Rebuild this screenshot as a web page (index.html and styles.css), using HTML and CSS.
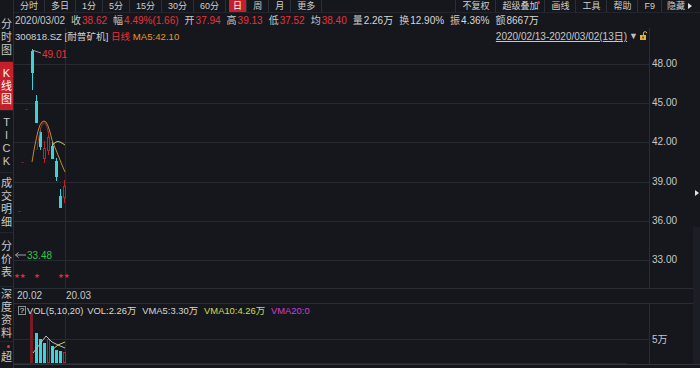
FILE: index.html
```html
<!DOCTYPE html>
<html lang="zh-CN">
<head>
<meta charset="utf-8">
<link rel="stylesheet" href="styles.css">
</head>
<body>
<div class="app">
  <!-- left vertical tabs -->
  <ul class="side">
    <li class="side-tab t-fs">分<br>时<br>图</li>
    <li class="side-tab t-k on">K<br>线<br>图</li>
    <li class="side-tab t-tick">T<br>I<br>C<br>K</li>
    <li class="side-tab t-deal">成<br>交<br>明<br>细</li>
    <li class="side-tab t-price">分<br>价<br>表</li>
    <li class="side-tab t-depth">深<br>度<br>资<br>料</li>
    <li class="side-tab t-super"><i class="dot"></i>超</li>
  </ul>

  <div class="main">
    <div class="toolbar">
      <div class="tabs">
        <span class="tab">分时</span>
        <span class="tab">多日</span>
        <span class="tab">1分</span>
        <span class="tab">5分</span>
        <span class="tab">15分</span>
        <span class="tab">30分</span>
        <span class="tab">60分</span>
        <span class="tab active">日</span>
        <span class="tab">周</span>
        <span class="tab">月</span>
        <span class="tab">更多</span>
      </div>
      <div class="tabs tabs-right">
        <span class="tab">不复权</span>
        <span class="tab">超级叠加<i class="badge"></i></span>
        <span class="tab">画线</span>
        <span class="tab">工具</span>
        <span class="tab">帮助</span>
        <span class="tab">F9</span>
        <span class="tab last">隐藏<i class="caret"></i></span>
      </div>
    </div>

    <div class="quote">
      <span class="q-date">2020/03/02</span>
      <span>收<b class="rise">38.62</b></span>
      <span>幅<b class="rise">4.49%(1.66)</b></span>
      <span>开<b class="rise">37.94</b></span>
      <span>高<b class="rise">39.13</b></span>
      <span>低<b class="rise">37.52</b></span>
      <span>均<b class="rise">38.40</b></span>
      <span>量<b>2.26万</b></span>
      <span>换<b>12.90%</b></span>
      <span>振<b>4.36%</b></span>
      <span>额<b>8667万</b></span>
    </div>

    <div class="board">
      <!-- price panel -->
      <div class="plot">
        <div class="caption">
          <span class="title">300818.SZ [耐普矿机] <span class="rise">日线</span> <span class="ma5">MA5:42.10</span></span>
          <span class="range"><u>2020/02/13-2020/03/02(13日)</u><i class="tri">▼</i>
            <svg class="lock" width="7" height="9" viewBox="0 0 7 9">
              <path d="M3.5 4V2.2a1.6 1.6 0 0 1 3.2 0" fill="none" stroke="#e2b42a" stroke-width="1"/>
              <rect x="0" y="4" width="6" height="5" fill="#e2b42a"/>
              <rect x="2.5" y="5.5" width="1" height="2" fill="#15171c"/>
            </svg>
          </span>
        </div>
        <svg class="canvas" width="635" height="260" viewBox="0 0 635 260">
          <g class="grid">
            <line x1="0" y1="36.5" x2="635" y2="36.5"/>
            <line x1="0" y1="75.5" x2="635" y2="75.5"/>
            <line x1="0" y1="114.5" x2="635" y2="114.5"/>
            <line x1="0" y1="154.5" x2="635" y2="154.5"/>
            <line x1="0" y1="193.5" x2="635" y2="193.5"/>
            <line x1="0" y1="232.5" x2="635" y2="232.5"/>
            <line x1="51.5" y1="0" x2="51.5" y2="260"/>
          </g>

          <g class="mark">
            <rect x="11" y="81" width="3" height="1"/>
            <rect x="7" y="134" width="3" height="1"/>
            <rect x="4" y="183" width="3" height="1"/>
          </g>

          <!-- falling days -->
          <g class="fall">
            <line x1="18.5" y1="21" x2="18.5" y2="62"/><rect x="17" y="23" width="3" height="22"/>
            <line x1="22.5" y1="67" x2="22.5" y2="95"/><rect x="21" y="73" width="3" height="22"/>
            <line x1="26.5" y1="100" x2="26.5" y2="122"/><rect x="25" y="104" width="3" height="15"/>
            <line x1="38.5" y1="114" x2="38.5" y2="131"/><rect x="37" y="118" width="3" height="13"/>
            <line x1="42.5" y1="130" x2="42.5" y2="153"/><rect x="41" y="133" width="3" height="16"/>
            <line x1="46.5" y1="161" x2="46.5" y2="180"/><rect x="45" y="168" width="3" height="12"/>
          </g>
          <!-- rising days, hollow -->
          <g class="up">
            <line x1="30.5" y1="113" x2="30.5" y2="135"/><rect x="29.5" y="120.5" width="2" height="10"/>
            <line x1="34.5" y1="103" x2="34.5" y2="127"/><rect x="33.5" y="109.5" width="2" height="13"/>
            <line x1="50.5" y1="152" x2="50.5" y2="175"/><rect x="49.5" y="158.5" width="2" height="11"/>
          </g>

          <polyline class="ma-a" points="18,134 20,122 22,112 24,103 26,97 28,94 30,93 32,94 34,98 36,104 38,112 40,117 42,122 44,127 46,132 48,137 51,144"/>
          <polyline class="ma-b" points="23,122 25,108 27,99 29,95 31,95 33,99 35,108 36,117"/>
          <polyline class="ma-c" points="38,118 40,115.5 42,114 44,113.5 46,114 48,115 51,117"/>

          <line class="lead" x1="18" y1="22" x2="27" y2="25"/>
          <text class="lbl rise-fill" x="28" y="30">49.01</text>
          <path class="pointer" d="M1.5 227H12M1.5 227l3-2.5M1.5 227l3 2.5"/>
          <text class="lbl low-fill" x="13" y="230.5">33.48</text>
          <g class="stars">
            <text x="0" y="249.5">★★</text>
            <text x="20" y="249.5">★</text>
            <text x="44" y="249.5">★★</text>
          </g>
        </svg>
      </div>
      <div class="axis">
        <span>48.00</span>
        <span>45.00</span>
        <span>42.00</span>
        <span>39.00</span>
        <span>36.00</span>
        <span>33.00</span>
      </div>
      <div class="strip"><i class="caret"></i></div>

      <div class="dates">
        <span class="date">20.02</span>
        <span class="date">20.03</span>
      </div>

      <!-- volume panel -->
      <div class="plot">
        <div class="caption vol-caption">
          <i class="help">?</i>
          <span class="v-name">VOL(5,10,20)</span>
          <span class="v-item">VOL:2.26万</span>
          <span class="v-item">VMA5:3.30万</span>
          <span class="v-item vma10">VMA10:4.26万</span>
          <span class="v-item vma20">VMA20:0</span>
        </div>
        <svg class="canvas" width="635" height="60" viewBox="0 0 635 60">
          <g class="grid">
            <line x1="0" y1="35.5" x2="635" y2="35.5"/>
            <line x1="51.5" y1="0" x2="51.5" y2="60"/>
          </g>
          <line class="base" x1="0" y1="59.5" x2="613" y2="59.5"/>
          <rect class="bar-ipo" x="16" y="9" width="3" height="50"/>
          <g class="fall">
            <rect x="21" y="29" width="3" height="30"/>
            <rect x="25" y="35" width="3" height="24"/>
            <rect x="29" y="39" width="3" height="20"/>
            <rect x="37" y="42" width="3" height="17"/>
            <rect x="41" y="46" width="3" height="13"/>
            <rect x="45" y="47" width="3" height="12"/>
          </g>
          <g class="up">
            <rect x="33.5" y="35.5" width="2" height="23"/>
            <rect x="49.5" y="48.5" width="2" height="10"/>
          </g>
          <polyline class="vma-a" points="19,49 32,32 38,38 44,41 51,44"/>
          <polyline class="vma-b" points="38,46 44,41 51,38"/>
        </svg>
      </div>
      <div class="axis vol-axis">
        <span>5万</span>
      </div>
    </div>
    <div class="status"></div>
  </div>
</div>
</body>
</html>
```

FILE: styles.css
```css
* {
    box-sizing: border-box;
    margin: 0;
    padding: 0;
}

body {
    width: 700px;
    height: 368px;
    overflow: hidden;
    background: #15171c;
    color: #c8c8c8;
    font: 10px/12px "Liberation Sans", "Noto Sans CJK SC", sans-serif;
}

i, b, u {
    font-style: normal;
    font-weight: normal;
}

.app {
    display: flex;
    height: 368px;
}

/* left vertical tabs */
.side {
    width: 14px;
    flex: none;
    list-style: none;
    padding-top: 13px;
    border-right: 1px solid #2a2d35;
    font-size: 11px;
    line-height: 13px;
    text-align: center;
}

.side-tab {
    display: flex;
    flex-direction: column;
    justify-content: center;
    align-items: center;
    border-bottom: 1px solid #22252c;
}

.side-tab.on {
    background: #c41f2a;
    color: #fff;
}

.t-fs { height: 49px; }
.t-k { height: 49px; }
.t-tick { height: 62px; }
.t-deal { height: 60px; }
.t-price { height: 54px; }
.t-depth { height: 55px; }

.t-super {
    height: 26px;
    justify-content: flex-start;
    padding-top: 3px;
    border-bottom: 0;
}

.dot {
    width: 3px;
    height: 3px;
    margin: 0 0 3px 4px;
    border-radius: 50%;
    background: #e8323c;
}

.main {
    flex: 1;
    display: flex;
    flex-direction: column;
}

/* period and tool buttons */
.toolbar {
    height: 13px;
    display: flex;
    justify-content: space-between;
    padding-right: 7px;
    border-bottom: 1px solid #22252c;
    font-size: 9px;
}

.tabs {
    display: flex;
}

.tabs-right {
    border-left: 1px solid #2c2f37;
}

.tab {
    position: relative;
    padding: 0 6px;
    border-right: 1px solid #2c2f37;
    line-height: 12px;
    color: #cfcfcf;
}

.tab.active {
    margin-left: 3px;
    padding: 0 4px;
    background: #c41f2a;
    color: #fff;
}

.tab.last {
    display: flex;
    align-items: center;
    border-right: 0;
    padding: 0 1px 0 5px;
}

.badge {
    position: absolute;
    top: 1px;
    right: 4px;
    width: 3px;
    height: 3px;
    border-radius: 50%;
    background: #e8323c;
}

/* small right-pointing triangle */
.caret {
    display: block;
    width: 0;
    height: 0;
    border-left: 4px solid #e0e0e0;
    border-top: 3px solid transparent;
    border-bottom: 3px solid transparent;
}

.tab .caret {
    margin-left: 3px;
}

/* daily quote line */
.quote {
    height: 15px;
    display: flex;
    align-items: center;
    gap: 6px;
    padding-left: 1px;
    color: #c8c8c8;
}

.quote b {
    margin-left: 1px;
    color: #d8d8d8;
}

.rise,
.quote b.rise {
    color: #e8323c;
}

.ma5 {
    color: #e39a2c;
}

/* chart panels */
.board {
    display: grid;
    grid-template-columns: 635px 44px 7px;
    grid-template-rows: 260px 16px 60px;
}

.plot {
    position: relative;
}

.canvas {
    display: block;
}

.caption {
    position: absolute;
    top: 2px;
    left: 1px;
    right: 2px;
    display: flex;
    justify-content: space-between;
    line-height: 13px;
    color: #d0d0d0;
}

.title {
    font-size: 9.6px;
}

.range {
    display: flex;
    align-items: center;
    gap: 2px;
    color: #c8c8c8;
}

.range u {
    text-decoration: underline;
}

.tri {
    font-size: 9px;
    color: #bfbfbf;
}

.lock {
    margin-top: -3px;
}

.axis {
    display: flex;
    flex-direction: column;
    gap: 27.2px;
    padding: 30px 0 0 2px;
    border-left: 1px solid #2a2d35;
    color: #c8c8c8;
}

.strip {
    grid-column: 3;
    grid-row: 1 / 4;
    padding: 162px 0 0 2px;
    background: linear-gradient(to bottom, transparent 199px, #1b1e24 199px);
}

.dates {
    grid-column: 1 / 3;
    display: flex;
    align-items: center;
    padding-left: 3px;
    border-top: 1px solid #2a2d35;
    border-bottom: 1px solid #2a2d35;
}

.date {
    width: 49px;
}

.vol-caption {
    top: 0;
    left: 4px;
    right: auto;
    justify-content: flex-start;
    align-items: center;
    font-size: 9.4px;
    color: #d8d8d8;
}

.help {
    width: 8px;
    height: 9px;
    margin-right: 1px;
    border: 1px solid #8a8a8a;
    font-size: 8px;
    line-height: 7px;
    text-align: center;
    color: #e0e0e0;
}

.v-name {
    margin-right: 4px;
}

.v-item {
    margin-right: 6px;
}

.vma10 {
    color: #d8d84a;
}

.vma20 {
    color: #d63cd6;
}

.vol-axis {
    padding-top: 30px;
}

.status {
    flex: 1;
    border-top: 1px solid #30343c;
}

/* svg drawing */
.grid line {
    stroke: #262a32;
    stroke-width: 1;
}

.fall line {
    stroke: #3cd2d8;
}

.fall rect {
    fill: #3cd2d8;
}

.up line {
    stroke: #b8242e;
}

.up rect {
    fill: #15171c;
    stroke: #b8242e;
}

.mark rect {
    fill: #7a1a22;
}

.ma-a,
.ma-b,
.ma-c,
.vma-a,
.vma-b {
    fill: none;
    stroke-width: 1;
    stroke-linejoin: round;
}

.ma-a { stroke: #c8882a; }
.ma-b { stroke: #9c2a2c; }
.ma-c { stroke: #c8c86a; }
.vma-a { stroke: #bcbcbc; }
.vma-b { stroke: #d0d060; }

.lead {
    stroke: #9a9a9a;
}

.pointer {
    fill: none;
    stroke: #a0a0a0;
}

.lbl {
    font: 10px "Liberation Sans", sans-serif;
}

.rise-fill { fill: #e8323c; }
.low-fill { fill: #2fc44e; }

.stars text {
    font: 6.5px "DejaVu Sans", sans-serif;
    fill: #e8283a;
}

.base {
    stroke: #4d1820;
}

.bar-ipo {
    fill: #7a1a22;
}
```
